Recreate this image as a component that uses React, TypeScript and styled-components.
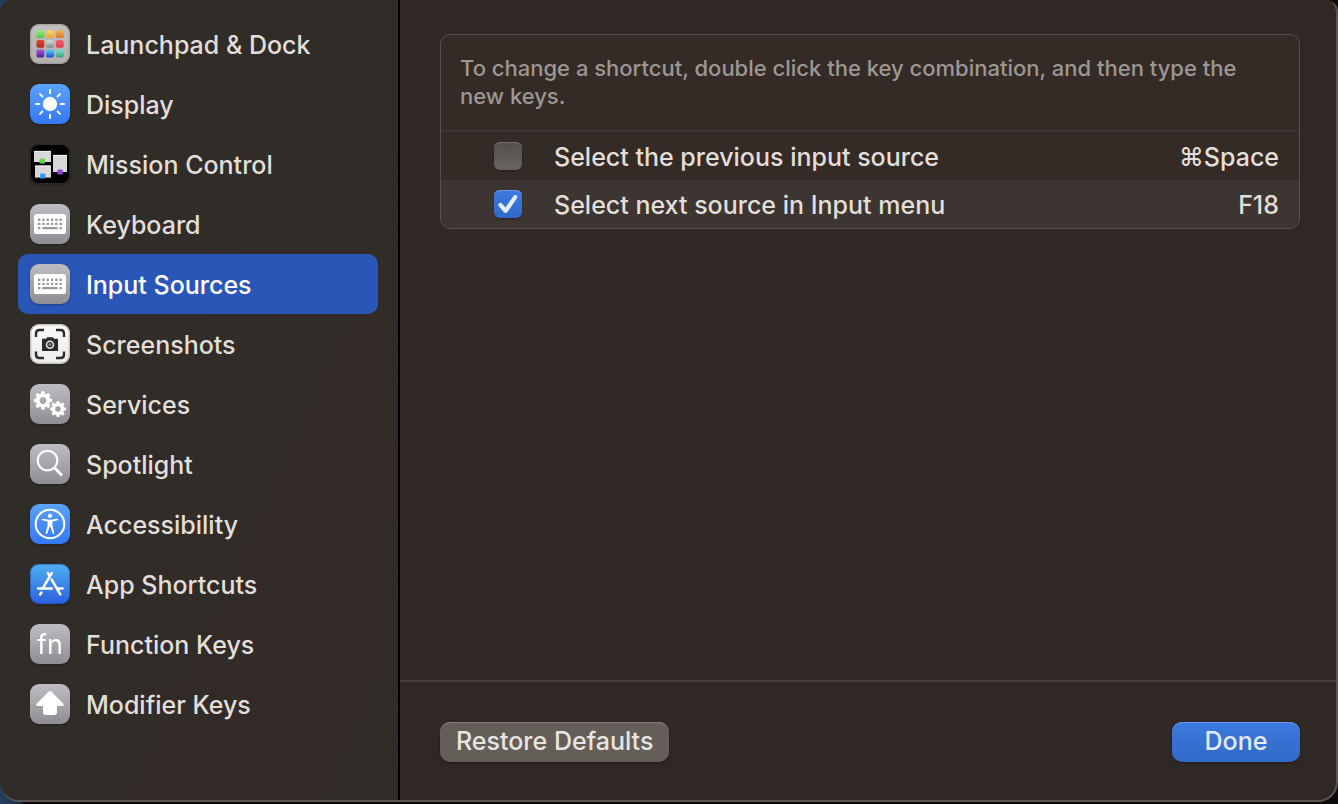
import React from "react";
import styled, { createGlobalStyle, css } from "styled-components";

const GlobalStyle = createGlobalStyle`
  *, *::before, *::after { box-sizing: border-box; }
  body {
    margin: 0;
    background: #0b0b0d;
    color: #e2deda;
    font-family: Inter, "Liberation Sans", sans-serif;
    font-size: 25px;
    font-weight: 500;
    line-height: 32px;
  }
`;

const Backdrop = styled.div`
  display: flex;
  min-height: 100vh;
  padding-bottom: 2px;
  background: linear-gradient(90deg, #24405f 0, #1b2f47 20px, #0b0b0d 24px);
`;

const Window = styled.main`
  display: flex;
  flex: 1;
  overflow: hidden;
  background: #302824;
  border: solid #5b5652;
  border-width: 0 2px 2px 0;
  border-radius: 12px 12px 20px 20px;
`;

const Sidebar = styled.nav`
  flex: 0 0 400px;
  padding: 14px 20px 14px 18px;
  border-right: 2px solid #000;
  background: linear-gradient(115deg, #302d29 0%, #312c28 60%, #332a27 80%, #2f2c28 100%);
`;

const SidebarList = styled.ul`
  margin: 0;
  padding: 0;
  list-style: none;
`;

const SidebarLink = styled.a<{ $active?: boolean }>`
  display: flex;
  align-items: center;
  gap: 16px;
  height: 60px;
  padding: 0 12px;
  border-radius: 10px;
  color: #e2deda;
  text-decoration: none;
  ${(p) => p.$active && css`
    background: #2a56b7;
    color: #fff;
  `}
`;

const LinkLabel = styled.span`
  padding-top: 2px;
`;

const Icon = styled.svg`
  flex: none;
  width: 40px;
  height: 40px;
  overflow: visible;
  filter: drop-shadow(0 1px 1px rgba(0, 0, 0, 0.3));
`;

const Content = styled.section`
  display: flex;
  flex: 1;
  flex-direction: column;
  min-width: 0;
`;

const Pane = styled.div`
  flex: 1;
  padding: 34px 36px 34px 40px;
`;

const Box = styled.div`
  overflow: hidden;
  border: 1px solid #57514d;
  border-radius: 10px;
  background: #342b27;
`;

const Hint = styled.p`
  margin: 0;
  padding: 19px 19px 20px;
  border-bottom: 2px solid #3c3531;
  color: #9d9793;
  font-size: 22px;
  line-height: 28px;
`;

const ShortcutTable = styled.table`
  width: 100%;
  border-collapse: collapse;
`;

const ShortcutRow = styled.tr`
  height: 48px;
  &:nth-child(even) { background: #3d3531; }
`;

const CheckCell = styled.td`
  width: 113px;
  padding: 0 0 0 53px;
`;

const NameCell = styled.td`
  padding: 2px 0 0;
`;

const KeyCell = styled.td`
  padding: 2px 20px 0;
  text-align: right;
`;

const CheckBox = styled.input`
  display: grid;
  place-items: center;
  appearance: none;
  width: 28px;
  height: 28px;
  margin: 0;
  border-radius: 6px;
  background: linear-gradient(#544e4a, #6a6460);
  box-shadow: inset 0 1px #76706c, 0 1px 2px rgba(0, 0, 0, 0.35);

  &:checked {
    background: linear-gradient(#3d7ae0, #3069c8);
    box-shadow: inset 0 1px #6a9bea, 0 1px 2px rgba(0, 0, 0, 0.35);
  }
  &:checked::after {
    content: "";
    width: 20px;
    height: 20px;
    background: #e4ecfa;
    clip-path: path("M.8 12.2 Q-.2 10.4 1.2 9.3 Q2.8 8.2 4.2 9.8 L7.3 13.6 L15.5 1.9 Q16.7 .3 18.4 1.3 Q20 2.5 19 4.2 L9.4 18 Q7.6 20 5.6 18 Z");
  }
`;

const Footer = styled.footer`
  display: flex;
  align-items: center;
  justify-content: space-between;
  height: 120px;
  padding: 2px 36px 0 40px;
  border-top: 2px solid #463e3a;
`;

const Button = styled.button<{ $primary?: boolean }>`
  height: 40px;
  padding: 0 16px 2px;
  border: 0;
  border-radius: 10px;
  background: #645e59;
  box-shadow: inset 0 1px #85807b, 0 1px 2px rgba(0, 0, 0, 0.4);
  color: #e8e4e1;
  font: inherit;
  ${(p) => p.$primary && css`
    min-width: 128px;
    background: linear-gradient(#3d7ae0, #3069c6);
    box-shadow: inset 0 1px #6a9bea, 0 1px 2px rgba(0, 0, 0, 0.4);
    color: #e1eafa;
  `}
`;

const GlyphText = styled.text`
  font-family: Inter, sans-serif;
  font-size: 27px;
  font-weight: 400;
`;

type TileProps = { id: string; from: string; to: string; children: React.ReactNode };

const Tile = ({ id, from, to, children }: TileProps) => (
  <Icon viewBox="0 0 40 40" aria-hidden="true">
    <defs>
      <linearGradient id={id} x1="0" y1="0" x2="0" y2="1">
        <stop offset="0" stopColor={from} />
        <stop offset="1" stopColor={to} />
      </linearGradient>
    </defs>
    <rect width="40" height="40" rx="9" fill={`url(#${id})`} />
    {children}
  </Icon>
);

const GREY = { from: "#bebdc1", to: "#8e8d92" };
const BLUE = { from: "#5ba2f8", to: "#3478f6" };

const launchpadColors = [
  ["#8be878", "#4fc63c"], ["#f8cf5c", "#e8a52c"], ["#efa94a", "#d9772c"],
  ["#d8402f", "#b3281f"], ["#c9d0d4", "#7d878c"], ["#f4586a", "#e23a50"],
  ["#a04bd8", "#4d1f96"], ["#4cc0f6", "#1a48c8"], ["#6fd8c8", "#3b9a78"],
];

const LaunchpadIcon = () => (
  <Tile id="launchpad" from="#c2c0bf" to="#b2b0af">
    <rect x=".8" y=".8" width="38.4" height="38.4" rx="8.4" fill="none" stroke="#8e8b89" strokeOpacity=".7" />
    {launchpadColors.map(([a, b], i) => {
      const x = 6.5 + (i % 3) * 9.7;
      const y = 6.2 + Math.floor(i / 3) * 9.7;
      return (
        <g key={i}>
          <linearGradient id={`app${i}`} x1="0" y1="0" x2="0" y2="1">
            <stop offset=".2" stopColor={a} />
            <stop offset="1" stopColor={b} />
          </linearGradient>
          <rect x={x} y={y} width="7.8" height="7.8" rx="1.6" fill={`url(#app${i})`} />
        </g>
      );
    })}
  </Tile>
);

const DisplayIcon = () => (
  <Tile id="display" {...BLUE}>
    <circle cx="20" cy="20" r="7.2" fill="#fff" />
    <g stroke="#fff" strokeWidth="2" strokeLinecap="round">
      {[0, 45, 90, 135, 180, 225, 270, 315].map((a) => (
        <path key={a} d="M20 9.3V6" transform={`rotate(${a} 20 20)`} />
      ))}
    </g>
  </Tile>
);

const MissionIcon = () => (
  <Tile id="mission" from="#000" to="#000">
    <rect x=".5" y=".5" width="39" height="39" rx="8.6" fill="none" stroke="#2b2b2b" />
    <g fill="#d8d8d8">
      <rect x="4" y="7" width="17" height="11" />
      <rect x="5" y="21.6" width="16" height="12" />
      <rect x="23" y="11" width="14" height="17" />
    </g>
    <path d="M4 7.4h17M5 22h16M23 11.4h14" stroke="#f4f4f4" />
    <rect x="9.5" y="14.6" width="5.4" height="5" rx="1.2" fill="#69d058" />
    <rect x="10" y="29.6" width="5.4" height="5" rx="1.2" fill="#369bf0" />
    <rect x="27.4" y="25.4" width="5.4" height="5" rx="1.2" fill="#8b45cf" />
  </Tile>
);

const KeyboardIcon = ({ id }: { id: string }) => (
  <Tile id={id} {...GREY}>
    <rect x="4" y="10" width="32" height="20" rx="2.6" fill="#fff" />
    <g fill="#98979c">
      {[0, 1].map((r) =>
        [0, 1, 2, 3, 4, 5].map((c) => (
          <rect key={`${r}-${c}`} x={8 + c * 4.3} y={14.5 + r * 4.2} width="2.4" height="2.4" rx=".4" />
        ))
      )}
      <rect x="8" y="22.9" width="2.4" height="2.4" rx=".4" />
      <rect x="12.3" y="22.9" width="15.3" height="2.4" rx=".4" />
      <rect x="29.5" y="22.9" width="2.4" height="2.4" rx=".4" />
    </g>
  </Tile>
);

const ScreenshotIcon = () => (
  <Tile id="screenshot" from="#fbfafa" to="#ecebeb">
    <rect x=".8" y=".8" width="38.4" height="38.4" rx="8.4" fill="none" stroke="#b5b2b0" />
    <path d="M6 13V9.5Q6 6 9.5 6H14M26 6h4.5Q34 6 34 9.5V13M34 27.5V30.500Q34 34 30.500 34H26M14 34H9.500Q6 34 6 30.500V27.500" fill="none" stroke="#2c2c2d" strokeWidth="2.4" />
    <path d="M12 14.800h4l1.200-1.600h5.600l1.200 1.600h4v12.200H12z" fill="#2a2a2b" />
    <circle cx="20" cy="20.7" r="3.5" fill="#3a3a3b" stroke="#e2e2e2" strokeWidth="1.5" />
    <circle cx="20" cy="20.7" r="1.4" fill="#808080" />
  </Tile>
);

const Gear = ({ cx, cy, r, hole, turn = 0 }: { cx: number; cy: number; r: number; hole: number; turn?: number }) => (
  <g transform={`translate(${cx} ${cy}) rotate(${turn})`}>
    <circle r={(r * 0.78 + hole) / 2} fill="none" stroke="#fff" strokeWidth={r * 0.78 - hole} />
    {[0, 45, 90, 135, 180, 225, 270, 315].map((a) => (
      <rect key={a} x={-r * 0.2} y={-r} width={r * 0.4} height={r * 0.36} rx={r * 0.1} fill="#fff" transform={`rotate(${a})`} />
    ))}
  </g>
);

const ServicesIcon = () => (
  <Tile id="services" {...GREY}>
    <Gear cx={13} cy={16.5} r={9.2} hole={3.4} />
    <Gear cx={28} cy={25} r={8} hole={2.8} />
  </Tile>
);

const SpotlightIcon = () => (
  <Tile id="spotlight" {...GREY}>
    <circle cx="17.5" cy="16.5" r="9.8" fill="none" stroke="#fff" strokeWidth="2" />
    <path d="M24.6 23.8l6.600 7" stroke="#fff" strokeWidth="2.8" strokeLinecap="round" />
  </Tile>
);

const AccessibilityIcon = () => (
  <Tile id="accessibility" {...BLUE}>
    <circle cx="20" cy="20" r="14.3" fill="none" stroke="#fff" strokeWidth="2.1" />
    <circle cx="20" cy="11.9" r="2.1" fill="#fff" />
    <path d="M12.500 14.700l5.200.9q2.300.3 4.600 0l5.200-.9q.8 0 .8.700t-.7.800l-5.200 1.400v3.600l1.900 7.900q0 .8-.7.900t-.9-.6L20.300 22.600h-.6l-2.400 6.800q-.3.700-.9.600t-.7-.9l1.900-7.900v-3.600l-5.200-1.400q-.7-.2-.7-.8t.8-.7z" fill="#fff" />
  </Tile>
);

const AppStoreIcon = () => (
  <Tile id="appstore" from="#4fb0f0" to="#2c5fe0">
    <rect x=".6" y=".6" width="38.8" height="38.8" rx="8.5" fill="none" stroke="#1d4fb0" strokeOpacity=".5" />
    <g fill="none" stroke="#fff" strokeWidth="2.5" strokeLinecap="round">
      <path d="M21.800 9L12.800 24.200M17.800 9l2.100 3.300M21.600 15.500l8.700 14.800M11.400 28.600l-1.200 1.900M8 24.400h13.800M27.800 24.400H32.600" />
    </g>
  </Tile>
);

const FunctionIcon = () => (
  <Tile id="function" {...GREY}>
    <GlyphText x="20" y="30" textAnchor="middle" fill="#fff">fn</GlyphText>
  </Tile>
);

const ModifierIcon = () => (
  <Tile id="modifier" {...GREY}>
    <path d="M18.700 7.400q1.300-1 2.600 0L33.600 20.100q1 1.600-.8 2H27v6.400q0 2.400-2.400 2.400H15.400q-2.400 0-2.400-2.400v-6.400H7.200q-1.800-.4-.8-2z" fill="#fff" />
  </Tile>
);

const sections = [
  { label: "Launchpad & Dock", icon: <LaunchpadIcon /> },
  { label: "Display", icon: <DisplayIcon /> },
  { label: "Mission Control", icon: <MissionIcon /> },
  { label: "Keyboard", icon: <KeyboardIcon id="keyboard" /> },
  { label: "Input Sources", icon: <KeyboardIcon id="input" />, active: true },
  { label: "Screenshots", icon: <ScreenshotIcon /> },
  { label: "Services", icon: <ServicesIcon /> },
  { label: "Spotlight", icon: <SpotlightIcon /> },
  { label: "Accessibility", icon: <AccessibilityIcon /> },
  { label: "App Shortcuts", icon: <AppStoreIcon /> },
  { label: "Function Keys", icon: <FunctionIcon /> },
  { label: "Modifier Keys", icon: <ModifierIcon /> },
];

const shortcuts = [
  { id: "previous", name: "Select the previous input source", keys: "⌘Space", on: false },
  { id: "next", name: "Select next source in Input menu", keys: "F18", on: true },
];

export default function App() {
  return (
    <Backdrop>
      <GlobalStyle />
      <Window>
        <Sidebar>
          <SidebarList>
            {sections.map((s) => (
              <li key={s.label}>
                <SidebarLink href="#" $active={s.active} aria-current={s.active ? "page" : undefined}>
                  {s.icon}
                  <LinkLabel>{s.label}</LinkLabel>
                </SidebarLink>
              </li>
            ))}
          </SidebarList>
        </Sidebar>
        <Content>
          <Pane>
            <Box>
              <Hint>To change a shortcut, double click the key combination, and then type the new keys.</Hint>
              <ShortcutTable>
                <tbody>
                  {shortcuts.map((s) => (
                    <ShortcutRow key={s.id}>
                      <CheckCell><CheckBox type="checkbox" id={s.id} defaultChecked={s.on} /></CheckCell>
                      <NameCell><label htmlFor={s.id}>{s.name}</label></NameCell>
                      <KeyCell>{s.keys}</KeyCell>
                    </ShortcutRow>
                  ))}
                </tbody>
              </ShortcutTable>
            </Box>
          </Pane>
          <Footer>
            <Button type="button">Restore Defaults</Button>
            <Button type="button" $primary>Done</Button>
          </Footer>
        </Content>
      </Window>
    </Backdrop>
  );
}
